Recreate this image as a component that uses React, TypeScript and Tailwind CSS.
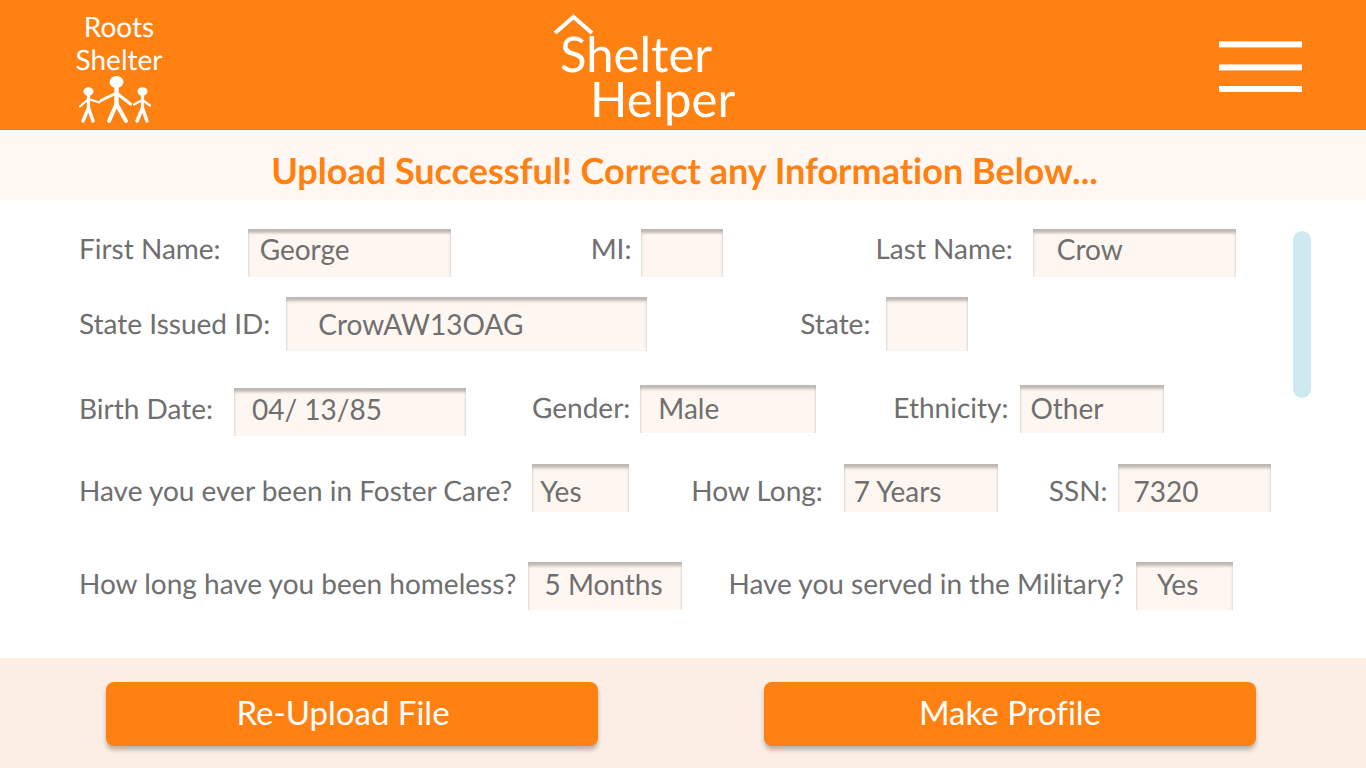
const ROW_TEXT = 'text-[28px] leading-9';

type FieldProps = {
  id: string;
  label: string;
  value?: string;
  /** Space before the field group. */
  group?: string;
  /** Alignment of the label against its box. */
  labelClass?: string;
  /** Width, left margin and padding of the box. */
  boxClass: string;
};

function Field({ id, label, value = '', group = '', labelClass = 'pt-[2px]', boxClass }: FieldProps) {
  return (
    <div className={`flex shrink-0 items-start ${group}`}>
      <label htmlFor={id} className={`whitespace-nowrap ${ROW_TEXT} ${labelClass}`}>
        {label}
      </label>
      <input
        id={id}
        type="text"
        defaultValue={value}
        className={`rounded-none bg-[#fef6f0] shadow-[inset_0_4px_3px_rgba(0,0,0,0.25)] outline-none ${ROW_TEXT} ${boxClass}`}
      />
    </div>
  );
}

function Family() {
  return (
    <svg width="74" height="48" viewBox="0 0 74 48" fill="none" stroke="white" strokeLinecap="round" strokeLinejoin="round" aria-hidden="true">
      <ellipse cx="37.500" cy="6" rx="7" ry="6" fill="white" stroke="none" />
      <path d="M37.500 10V29" strokeWidth="4.500" />
      <path d="M22 24.500L37.500 17L51.500 28" strokeWidth="3" />
      <path d="M37.500 28L30 45M37.500 28L47 45" strokeWidth="4" />
      <ellipse cx="9.500" cy="15.500" rx="5" ry="4.200" fill="white" stroke="none" />
      <path d="M9.500 18V33" strokeWidth="3.200" />
      <path d="M1 30.500L9.500 23L20.500 26.500" strokeWidth="2.200" />
      <path d="M9.500 32L4 45M9.500 32L14 45" strokeWidth="3.400" />
      <ellipse cx="63.500" cy="15.500" rx="5" ry="4.200" fill="white" stroke="none" />
      <path d="M63.500 18V33" strokeWidth="3.200" />
      <path d="M55 28.500L63.500 24L71 29.500" strokeWidth="2.200" />
      <path d="M63.500 32L58 45M63.500 32L68 45" strokeWidth="3.400" />
    </svg>
  );
}

export default function App() {
  return (
    <div className="flex min-h-screen flex-col bg-white font-['Lato',sans-serif] text-[#6f6f6f] [font-variant-ligatures:none] [text-rendering:geometricPrecision]">
      <header className="flex h-[130px] items-start bg-[#ff8112] pr-16 pl-[74px] text-white">
        <a href="#shelter" className="w-[90px] pt-[10px] text-center text-[28px] leading-[33px]">
          Roots Shelter
          <span className="flex pl-[5px]">
            <Family />
          </span>
        </a>
        <h1 className="relative ml-[396px] pt-8 text-[49px] leading-[45px]">
          <svg className="absolute top-3 -left-2" width="42" height="24" viewBox="0 0 42 24" fill="none" stroke="white" strokeWidth="4" aria-hidden="true">
            <path d="M3 21L21.500 5L40 21" />
          </svg>
          <span className="block">Shelter</span>
          <span className="block pl-[30px]">Helper</span>
        </h1>
        <button type="button" aria-label="Menu" className="mt-10 ml-auto">
          <svg className="block" width="83" height="54" viewBox="0 0 83 54" fill="white" aria-hidden="true">
            <rect y="1.400" width="83" height="6" />
            <rect y="24.400" width="83" height="6" />
            <rect y="46" width="83" height="6" />
          </svg>
        </button>
      </header>

      <h2 className="h-[70px] bg-[#fff7f1] pt-[18px] pl-[3px] text-center text-[36px] leading-[44px] font-bold text-[#ff8112]">
        Upload Successful! Correct any Information Below...
      </h2>

      <main className="flex flex-1 items-start pr-[55px] pl-[79px]">
        <form className="min-w-0 flex-1 pt-[29px] pb-12">
          <div className="flex h-[68px] items-start">
            <Field id="first" label="First Name:" value="George" labelClass="pt-px" boxClass="ml-[27px] h-12 w-[203px] pb-2 pl-3" />
            <Field id="mi" label="MI:" group="ml-[140px]" labelClass="pt-px" boxClass="ml-[10px] h-12 w-[82px]" />
            <Field id="last" label="Last Name:" value="Crow" group="ml-[152px]" labelClass="pt-px" boxClass="ml-5 h-12 w-[203px] pb-2 pl-6" />
          </div>
          <div className="flex h-[88px] items-start">
            <Field id="state-id" label="State Issued ID:" value="CrowAW13OAG" labelClass="pt-2" boxClass="ml-4 h-[54px] w-[361px] pl-8" />
            <Field id="state" label="State:" group="ml-[153px]" labelClass="pt-2" boxClass="ml-4 h-[54px] w-[82px]" />
          </div>
          <div className="flex h-[79px] items-start">
            <Field id="birth" label="Birth Date:" value="04/ 13/85" group="pt-[3px]" boxClass="ml-[21px] h-12 w-[232px] pb-[6px] pl-[18px]" />
            <Field id="gender" label="Gender:" value="Male" group="ml-[66px]" labelClass="pt-1" boxClass="ml-[10px] h-12 w-[176px] pb-[2px] pl-[18px]" />
            <Field id="ethnicity" label="Ethnicity:" value="Other" group="ml-[77px]" labelClass="pt-1" boxClass="ml-3 h-12 w-[144px] pb-[2px] pl-[10px]" />
          </div>
          <div className="flex h-[98px] items-start">
            <Field id="foster" label="Have you ever been in Foster Care?" value="Yes" labelClass="pt-2" boxClass="ml-5 h-12 w-[97px] pt-[6px] pl-2" />
            <Field id="how-long" label="How Long:" value="7 Years" group="ml-[62px]" labelClass="pt-2" boxClass="ml-[21px] h-12 w-[154px] pt-[6px] pl-[10px]" />
            <Field id="ssn" label="SSN:" value="7320" group="ml-[51px]" labelClass="pt-2" boxClass="ml-[10px] h-12 w-[153px] pt-[6px] pl-4" />
          </div>
          <div className="flex items-start">
            <Field id="homeless" label="How long have you been homeless?" value="5 Months" labelClass="pt-[3px]" boxClass="ml-3 h-12 w-[154px] pb-1 pl-4" />
            <Field id="military" label="Have you served in the Military?" value="Yes" group="ml-[46px]" labelClass="pt-[3px]" boxClass="ml-3 h-12 w-[97px] pb-1 pl-[21px]" />
          </div>
        </form>
        <div className="mt-[31px] h-[167px] w-[18px] shrink-0 rounded-full bg-[#cceaef]" />
      </main>

      <footer className="grid grid-cols-2 gap-[166px] bg-[#fceee4] pt-6 pr-[110px] pb-[22px] pl-[106px] text-[33px] text-white">
        <button type="button" className="h-16 rounded-lg bg-[#ff8112] pr-[18px] pb-[2px] shadow-[0_4px_4px_rgba(0,0,0,0.25)]">
          Re-Upload File
        </button>
        <button type="button" className="h-16 rounded-lg bg-[#ff8112] pb-[2px] shadow-[0_4px_4px_rgba(0,0,0,0.25)]">
          Make Profile
        </button>
      </footer>
    </div>
  );
}
